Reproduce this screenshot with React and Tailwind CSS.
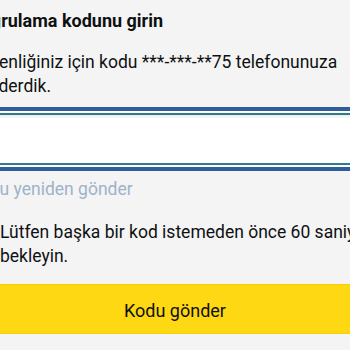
export default function App() {
  return (
    <div className="w-[350px] h-[350px] overflow-hidden bg-[#f4f4f5] text-[#0f1111] font-['Roboto',sans-serif]">
      <div className="ml-[-31px] w-[460px]">
        <div className="pr-[39px]">
          <h1 className="pt-[8px] text-[18px] leading-[26px] font-bold">Doğrulama kodunu girin</h1>
          <p className="mt-[17px] text-[17.5px] leading-[23.5px]">
            Güvenliğiniz için kodu ***-***-**75 telefonunuza gönderdik.
          </p>
        </div>

        {/* focused code input */}
        <div className="mt-[9px] border-t-4 border-b-4 border-[#2d5e9a] bg-white py-[2px]">
          <div className="h-[52px] border-y-2 border-[#2c7c8c] bg-white shadow-[inset_0_2px_3px_rgba(0,0,0,0.08)]" />
        </div>

        <div className="mt-[7px] text-[17.5px] leading-[23.5px] text-[#9db3c8]">Kodu yeniden gönder</div>

        <div className="mt-[19.5px] flex pr-[39px]">
          <div className="w-[31px] shrink-0" />
          <p className="text-[17.5px] leading-[23.5px]">
            Lütfen başka bir kod istemeden önce 60 saniye bekleyin.
          </p>
        </div>

        <button className="mt-[16px] ml-[31px] w-[350px] h-[50px] pt-[3px] bg-[#fed813] text-[18px] text-[#0f1111] border-y border-[#f5d000]">
          Kodu gönder
        </button>
      </div>
    </div>
  );
}
